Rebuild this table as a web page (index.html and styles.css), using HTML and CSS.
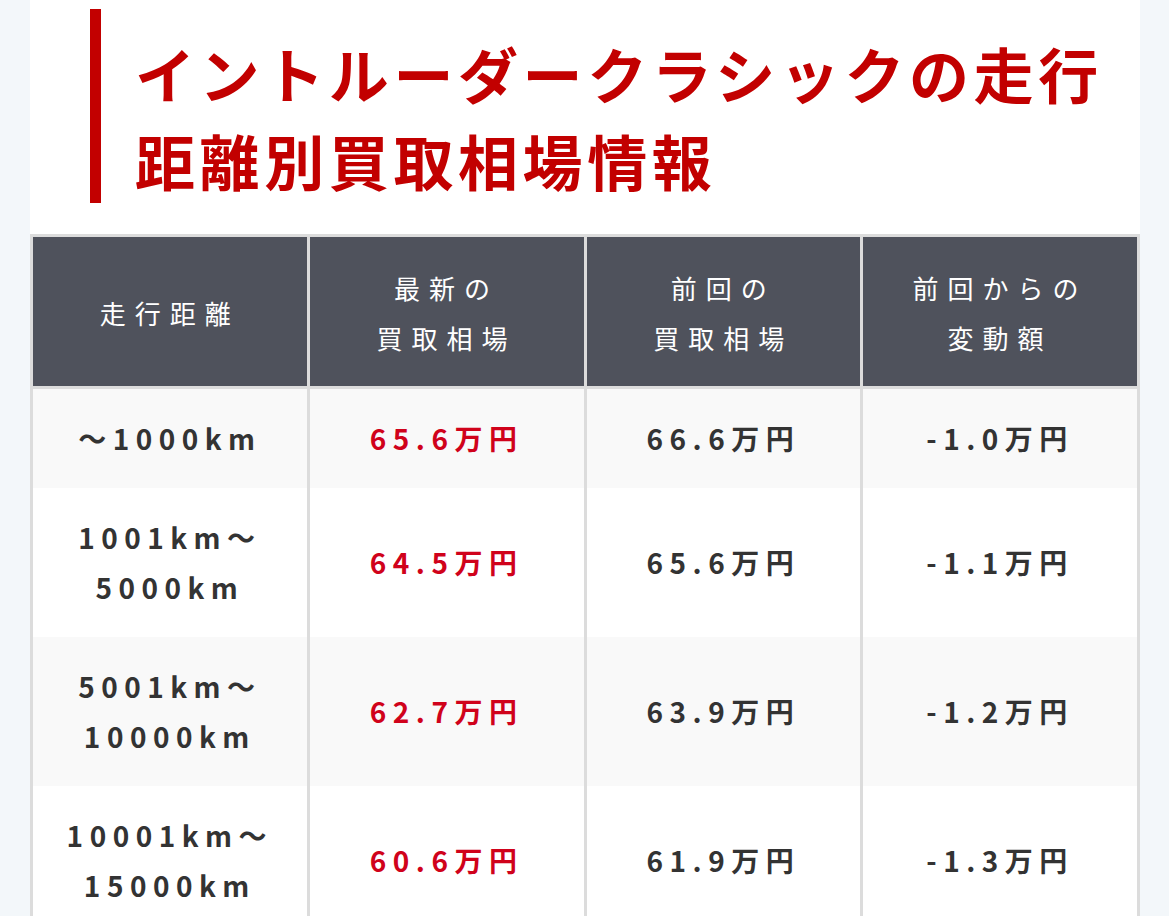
FILE: index.html
```html
<!DOCTYPE html>
<html lang="ja">
<head>
<meta charset="utf-8">
<title>イントルーダークラシックの走行距離別買取相場情報</title>
<link rel="stylesheet" href="styles.css">
</head>
<body>
<main class="card">
  <h2 class="title">イントルーダークラシックの走行<br>距離別買取相場情報</h2>
  <table class="price-table">
    <thead>
      <tr>
        <th>走行距離</th>
        <th>最新の<br>買取相場</th>
        <th>前回の<br>買取相場</th>
        <th>前回からの<br>変動額</th>
      </tr>
    </thead>
    <tbody>
      <tr>
        <td>～1000km</td>
        <td class="latest">65.6万円</td>
        <td>66.6万円</td>
        <td>-1.0万円</td>
      </tr>
      <tr>
        <td>1001km～<br>5000km</td>
        <td class="latest">64.5万円</td>
        <td>65.6万円</td>
        <td>-1.1万円</td>
      </tr>
      <tr>
        <td>5001km～<br>10000km</td>
        <td class="latest">62.7万円</td>
        <td>63.9万円</td>
        <td>-1.2万円</td>
      </tr>
      <tr>
        <td>10001km～<br>15000km</td>
        <td class="latest">60.6万円</td>
        <td>61.9万円</td>
        <td>-1.3万円</td>
      </tr>
    </tbody>
  </table>
</main>
</body>
</html>
```
FILE: styles.css
```css
html, body {
  margin: 0;
  padding: 0;
}

body {
  background: #f3f7fa;
  font-family: "Noto Sans CJK JP", "Noto Sans", sans-serif;
  color: #333333;
}

.card {
  margin-left: 30px;
  width: 1110px;
  background: #ffffff;
  padding-top: 9px;
  min-height: 907px;
}

.title {
  margin: 0 0 31px 60px;
  padding: 20px 0 0 34px;
  border-left: 11px solid #c20000;
  color: #c20000;
  font-size: 60px;
  font-weight: 700;
  line-height: 87px;
  letter-spacing: 4.6px;
}

.price-table {
  width: 100%;
  border-collapse: collapse;
  table-layout: fixed;
}

.price-table th,
.price-table td {
  text-align: center;
  vertical-align: middle;
}

.price-table th {
  padding: 26px 8px 23px;
  line-height: 50px;
  font-size: 26px;
  letter-spacing: 9px;
  background: #4f525c;
  color: #ffffff;
  font-weight: 400;
  border: 3px solid #dcdcdc;
}

.price-table td {
  padding: 24px 8px;
  line-height: 50.5px;
  font-size: 28px;
  letter-spacing: 6.5px;
  font-weight: 700;
  color: #333333;
  border-left: 3px solid #dcdcdc;
  border-right: 3px solid #dcdcdc;
}

.price-table tbody tr:nth-child(odd) td {
  background: #f9f9f9;
}

.price-table tbody tr:nth-child(even) td {
  background: #ffffff;
}

.price-table td.latest {
  color: #d0021b;
}
```
